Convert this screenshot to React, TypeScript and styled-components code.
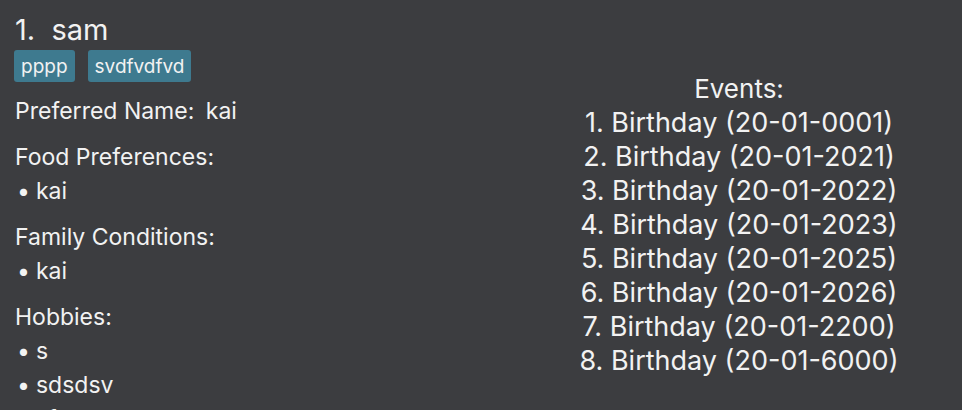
import React from 'react';
import styled, { createGlobalStyle } from 'styled-components';

const GlobalStyle = createGlobalStyle`
  html, body {
    margin: 0;
    padding: 0;
    background: #3c3d40;
  }
  body {
    font-family: Inter, "Noto Sans", sans-serif;
    color: #f2f2f2;
  }
`;

const Card = styled.div`
  width: 962px;
  height: 410px;
  overflow: hidden;
  display: flex;
  background: #3c3d40;
`;

const Left = styled.div`
  width: 520px;
  padding: 13px 0 0 15px;
  box-sizing: border-box;
  display: flex;
  flex-direction: column;
`;

const Name = styled.div`
  font-size: 29px;
  line-height: 34px;
  white-space: pre;
`;

const Tags = styled.div`
  display: flex;
  gap: 13px;
  margin-top: 3px;
  margin-left: -1px;
`;

const Tag = styled.span`
  background: #3e7a8f;
  border-radius: 3px;
  padding: 0 7px;
  height: 32px;
  display: flex;
  align-items: center;
  font-size: 19px;
`;

const Field = styled.div`
  margin-top: 12px;
  font-size: 23px;
  line-height: 34px;
`;

const Label = styled.div``;

const Value = styled.span`
  margin-left: 5px;
`;

const Bullet = styled.div`
  display: flex;
  gap: 6px;
  padding-left: 2px;
  &::before {
    content: '•';
  }
`;

const Right = styled.div`
  flex: 1;
  padding-top: 72px;
  display: flex;
  flex-direction: column;
  align-items: center;
  font-size: 27px;
  line-height: 34px;
  padding-right: 4px;
`;

const EventsTitle = styled.div`
  font-size: 26px;
`;

const events = ['0001', '2021', '2022', '2023', '2025', '2026', '2200', '6000'];

const fields: { label: string; items: string[] }[] = [
  { label: 'Food Preferences:', items: ['kai'] },
  { label: 'Family Conditions:', items: ['kai'] },
  { label: 'Hobbies:', items: ['s', 'sdsdsv', 'sf'] },
];

export default function App() {
  return (
    <Card>
      <GlobalStyle />
      <Left>
        <Name>{'1.  sam'}</Name>
        <Tags>
          <Tag>pppp</Tag>
          <Tag>svdfvdfvd</Tag>
        </Tags>
        <Field>
          <Label>
            Preferred Name: <Value>kai</Value>
          </Label>
        </Field>
        {fields.map((f) => (
          <Field key={f.label}>
            <Label>{f.label}</Label>
            {f.items.map((i) => (
              <Bullet key={i}>{i}</Bullet>
            ))}
          </Field>
        ))}
      </Left>
      <Right>
        <EventsTitle>Events:</EventsTitle>
        {events.map((y, i) => (
          <div key={y}>{`${i + 1}. Birthday (20-01-${y})`}</div>
        ))}
      </Right>
    </Card>
  );
}
